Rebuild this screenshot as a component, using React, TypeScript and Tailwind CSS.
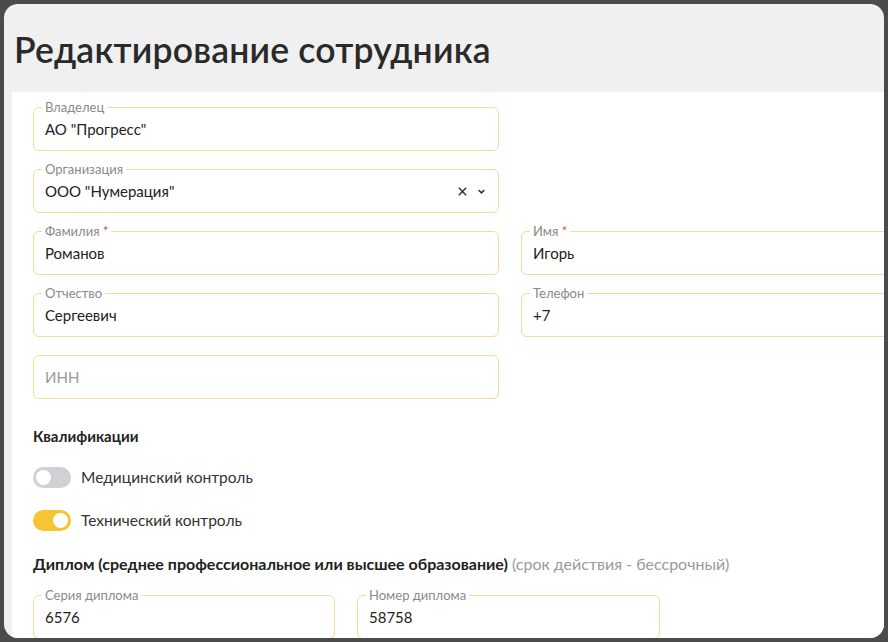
import React from "react";

function Field({ label, value, required, width, placeholder, select }: { label?: string; value?: string; required?: boolean; width: string; placeholder?: string; select?: boolean }) {
  return (
    <div className={`relative shrink-0 h-[44px] rounded-md border border-[#f3dc96] flex items-center px-[11px] ${width}`}>
      {label && (
        <span className="absolute -top-[8px] left-[8px] bg-white px-[3px] text-[13px] leading-[14px] text-[#8a8a8a]">
          {label}
          {required && <span className="text-[#e5484d]"> *</span>}
        </span>
      )}
      <span className={`flex-1 text-[15px] ${placeholder ? "text-[#9a9a9a]" : "text-[#222] pt-[1px]"}`}>{value ?? placeholder}</span>
      {select && (
        <span className="flex items-center gap-[8px] text-[#333]">
          <svg width="11" height="11" viewBox="0 0 12 12"><path d="M2 2l8 8M10 2l-8 8" stroke="currentColor" strokeWidth="1.6" /></svg>
          <svg width="11" height="11" viewBox="0 0 12 12"><path d="M3 4.5l3 3 3-3" stroke="currentColor" strokeWidth="1.6" fill="none" /></svg>
        </span>
      )}
    </div>
  );
}

function Toggle({ on, label }: { on?: boolean; label: string }) {
  return (
    <div className="flex items-center gap-[10px]">
      <div className={`w-[38px] h-[21px] rounded-full p-[3px] flex ${on ? "bg-[#f7c531] justify-end" : "bg-[#d0d1d4] justify-start"}`}>
        <div className="w-[15px] h-[15px] rounded-full bg-white" />
      </div>
      <span className="text-[15.5px] text-[#333]">{label}</span>
    </div>
  );
}

export default function App() {
  return (
    <div className="w-[888px] h-[642px] bg-[#4b4b4b] p-[4px] overflow-hidden" style={{ fontFamily: "Lato, 'Noto Sans', sans-serif" }}>
      <div className="w-full h-full rounded-[14px] overflow-hidden bg-[#f0f0f0] flex flex-col">
        <div className="h-[88px] shrink-0 flex items-center pl-[10px] pt-[4px]">
          <h1 className="text-[35.5px] font-semibold text-[#2a2a2a] tracking-[0.2px]">Редактирование сотрудника</h1>
        </div>
        <div className="flex-1 ml-[8px] bg-white pl-[21px] pt-[15px] flex flex-col">
          <div className="flex flex-col gap-[18px]">
            <Field label="Владелец" value='АО "Прогресс"' width="w-[466px]" />
            <Field label="Организация" value='ООО "Нумерация"' width="w-[466px]" select />
            <div className="flex gap-[22px]">
              <Field label="Фамилия" required value="Романов" width="w-[466px]" />
              <Field label="Имя" required value="Игорь" width="w-[400px]" />
            </div>
            <div className="flex gap-[22px]">
              <Field label="Отчество" value="Сергеевич" width="w-[466px]" />
              <Field label="Телефон" value="+7" width="w-[400px]" />
            </div>
            <Field placeholder="ИНН" width="w-[466px]" />
          </div>
          <div className="mt-[26px] text-[15px] font-bold text-[#222]">Квалификации</div>
          <div className="mt-[18px] flex flex-col gap-[20px]">
            <Toggle label="Медицинский контроль" />
            <Toggle on label="Технический контроль" />
          </div>
          <div className="mt-[20px] text-[16px] text-[#222]">
            <span className="font-bold">Диплом (среднее профессиональное или высшее образование)</span>
            <span className="text-[#9a9a9a]"> (срок действия - бессрочный)</span>
          </div>
          <div className="mt-[19px] flex gap-[22px]">
            <Field label="Серия диплома" value="6576" width="w-[302px]" />
            <Field label="Номер диплома" value="58758" width="w-[303px]" />
          </div>
        </div>
      </div>
    </div>
  );
}
